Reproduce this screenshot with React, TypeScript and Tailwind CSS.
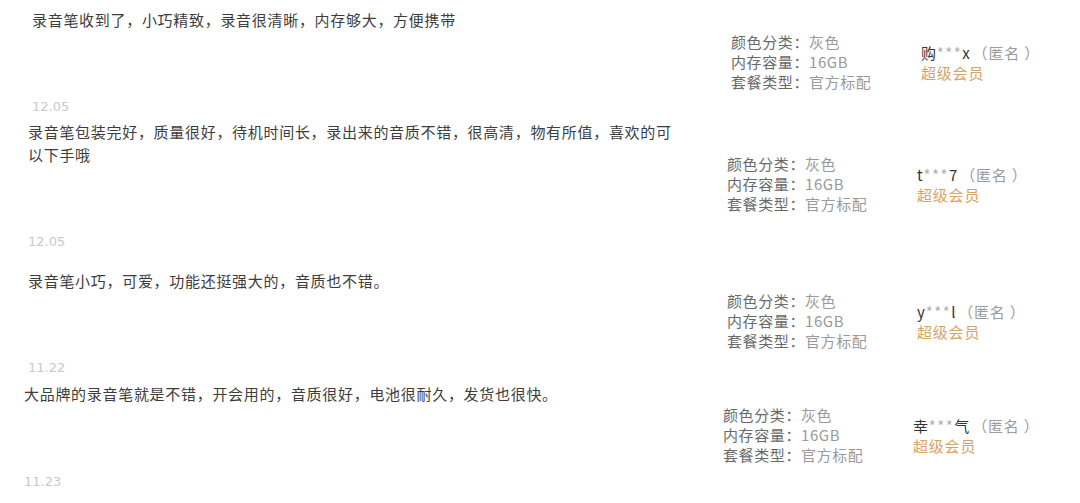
const reviews = [
  {
    text: '录音笔收到了，小巧精致，录音很清晰，内存够大，方便携带',
    first: '购',
    last: 'x',
    date: '12.05',
    wrap: 'pl-[32px] pt-[8px]',
    side: 'mt-[24px]',
    dateGap: 'mt-[7px]',
  },
  {
    text: '录音笔包装完好，质量很好，待机时间长，录出来的音质不错，很高清，物有所值，喜欢的可以下手哦',
    first: 't',
    last: '7',
    date: '12.05',
    wrap: 'pl-[28px] pt-[5px]',
    side: 'mt-[34px]',
    dateGap: 'mt-[20px]',
  },
  {
    text: '录音笔小巧，可爱，功能还挺强大的，音质也不错。',
    first: 'y',
    last: 'l',
    date: '11.22',
    wrap: 'pl-[28px] pt-[19px]',
    side: 'mt-[22px]',
    dateGap: 'mt-[9px]',
  },
  {
    text: '大品牌的录音笔就是不错，开会用的，音质很好，电池很耐久，发货也很快。',
    first: '幸',
    last: '气',
    date: '11.23',
    wrap: 'pl-[24px] pt-[6px]',
    side: 'mt-[23px]',
    dateGap: 'mt-[9px]',
  },
];

const specs = [
  ['颜色分类', '灰色'],
  ['内存容量', '16GB'],
  ['套餐类型', '官方标配'],
];

function Review({ r }: { r: (typeof reviews)[number] }) {
  return (
    <div className={r.wrap}>
      <div className="flex">
        {/* review text */}
        <div className="w-[699px] shrink-0">
          <p className="w-[652px] text-[15px] leading-[23px] tracking-[0.7px] text-[#3d3d3d]">{r.text}</p>
        </div>

        {/* sku info + buyer */}
        <div className={`flex ${r.side}`}>
          <div className="w-[190px] text-[15px] leading-5 tracking-[0.6px]">
            {specs.map(([k, v]) => (
              <div key={k} className="whitespace-nowrap">
                <span className="text-[#6a6a6a]">{k}：</span>
                <span className="text-[#9a9a9a]">{v}</span>
              </div>
            ))}
          </div>
          <div className="mt-[11px] text-[15px] leading-5 tracking-[0.8px]">
            <div className="whitespace-nowrap">
              <span className="text-[#333]">{r.first}</span>
              <span className="text-[15px] tracking-[1.5px] text-[#b0b0b0]">***</span>
              <span className="text-[#333]">{r.last}</span>
              <span className="ml-[2px] text-[#9c9c9c]">（匿名 ）</span>
            </div>
            <div className="text-[#d6a366]">超级会员</div>
          </div>
        </div>
      </div>

      <div
        className={`${r.dateGap} text-[13px] leading-4 text-[#c9c9c9]`}
        style={{ fontFamily: '"DejaVu Sans", sans-serif' }}
      >
        {r.date}
      </div>
    </div>
  );
}

export default function App() {
  return (
    <div
      className="w-[1080px] h-[503px] overflow-hidden bg-white"
      style={{ fontFamily: '"Noto Sans CJK SC", "Noto Sans", sans-serif' }}
    >
      {reviews.map((r) => (
        <Review key={r.first} r={r} />
      ))}
    </div>
  );
}
